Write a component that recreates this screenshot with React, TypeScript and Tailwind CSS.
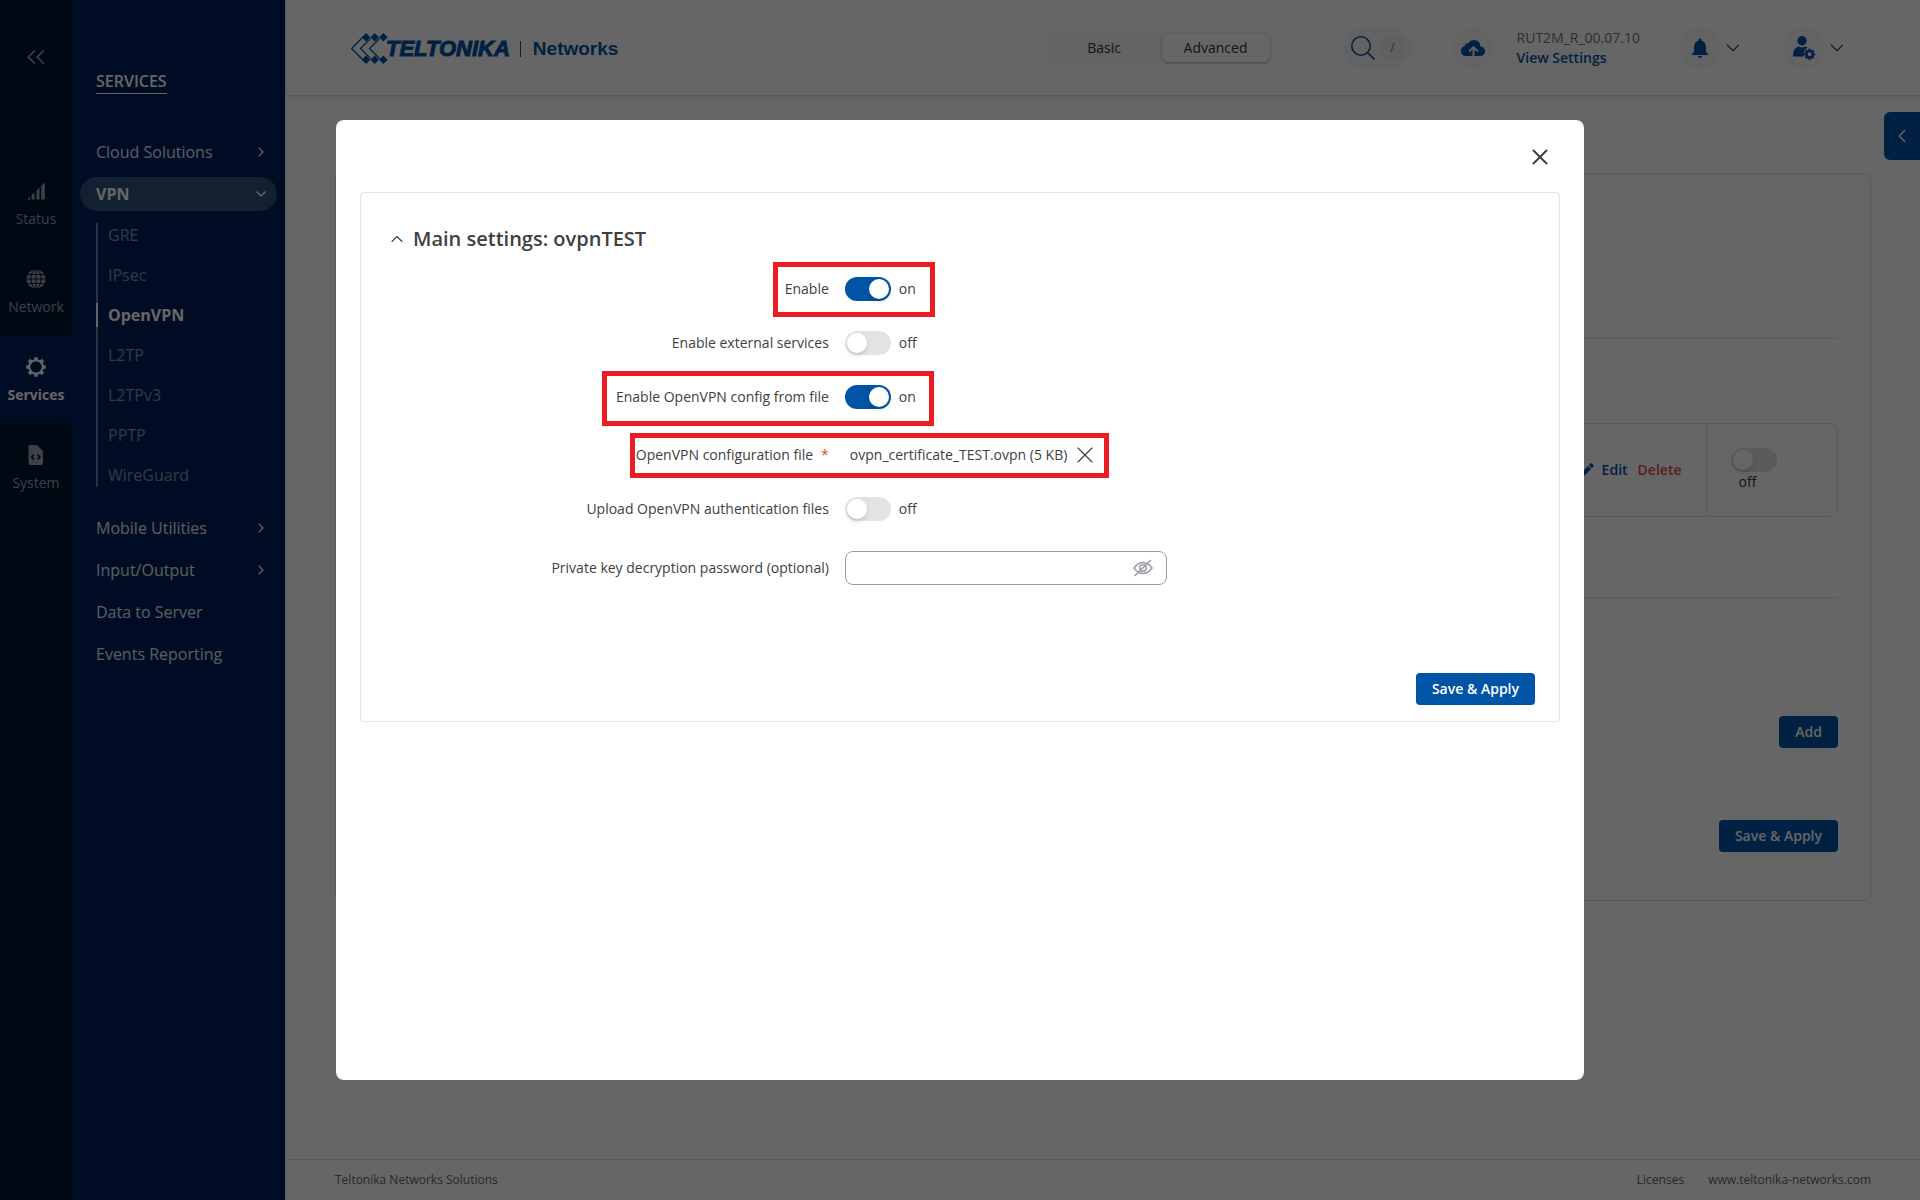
import { useState } from "react"
import type { ReactNode } from "react"
import { ChevronDown, ChevronLeft, ChevronRight, ChevronUp, X } from "lucide-react"
import { MdNotifications } from "react-icons/md"

const railItems = [
  { name: "Status", icon: <StatusIcon /> },
  { name: "Network", icon: <GlobeIcon /> },
  { name: "Services", icon: <CogIcon /> },
  { name: "System", icon: <FileCodeIcon /> },
]

const vpnItems = ["GRE", "IPsec", "OpenVPN", "L2TP", "L2TPv3", "PPTP", "WireGuard"]

const otherItems = [
  { name: "Mobile Utilities", nested: true },
  { name: "Input/Output", nested: true },
  { name: "Data to Server", nested: false },
  { name: "Events Reporting", nested: false },
]

function CollapseIcon() {
  return (
    <svg width="18" height="14" viewBox="0 0 18 14" fill="none" stroke="currentColor" strokeWidth="1.7" aria-hidden="true">
      <path d="M8 .5L1.2 7L8 13.5M17 .5L10.2 7L17 13.5" />
    </svg>
  )
}

function StatusIcon() {
  return (
    <svg width="18" height="18" viewBox="0 0 18 18" fill="currentColor" aria-hidden="true">
      <path d="M0 17.5L3 14.5V17.5ZM4.5 13.2L7.5 10.4V17.5H4.5ZM9.5 8.6L12.5 5.8V17.5H9.5ZM14.2 4L17.8 .5V17.5H14.2Z" />
    </svg>
  )
}

function GlobeIcon() {
  return (
    <svg width="20" height="20" viewBox="0 0 20 20" fill="none" aria-hidden="true">
      <circle cx="10" cy="10" r="9.6" fill="currentColor" />
      <g stroke="#001432" strokeWidth="1">
        <path d="M10 0V20M0 10H20M1.5 5.5H18.5M1.5 14.5H18.5" />
        <ellipse cx="10" cy="10" rx="5" ry="9.6" />
      </g>
    </svg>
  )
}

function CogIcon() {
  return (
    <svg width="20" height="20" viewBox="0 0 20 20" fill="none" aria-hidden="true">
      <circle cx="10" cy="10" r="6.8" stroke="currentColor" strokeWidth="2" />
      <g stroke="currentColor" strokeWidth="3.4">
        <path d="M10 .3V3M10 17V19.7M.3 10H3M17 10H19.7M3 3L5 5M15 15L17 17M3 17L5 15M15 5L17 3" />
      </g>
    </svg>
  )
}

function FileCodeIcon() {
  return (
    <svg width="16" height="20" viewBox="0 0 16 20" aria-hidden="true">
      <path d="M2 0H9L15 6V18a2 2 0 0 1-2 2H2.5a2 2 0 0 1-2-2V2A2 2 0 0 1 2 0Z" fill="currentColor" />
      <path d="M6 9.5L3.7 12L6 14.5M9.5 9.5L11.8 12L9.5 14.5" stroke="#001432" strokeWidth="1.7" fill="none" />
    </svg>
  )
}

function CloudIcon() {
  return (
    <svg width="24" height="16" viewBox="0 0 24 16" aria-hidden="true">
      <path
        d="M5 16A5 5 0 0 1 3.6 6.2A3.6 3.6 0 0 1 7.6 3.2A6.3 6.3 0 0 1 19.3 6.4A4.8 4.8 0 0 1 19.2 16Z"
        fill="#0054a6"
      />
      <path d="M12.5 16V8M8.2 11.5L12.5 7.2L16.8 11.5" stroke="#f7f7f7" strokeWidth="1.9" fill="none" />
    </svg>
  )
}

function SearchIcon() {
  return (
    <svg width="24" height="24" viewBox="0 0 24 24" fill="none" stroke="#0054a6" strokeWidth="1.6" aria-hidden="true">
      <circle cx="10" cy="10" r="9.2" />
      <path d="M16.5 16.5L23.5 23.5" />
    </svg>
  )
}

function UserCogIcon() {
  return (
    <svg width="24" height="24" viewBox="0 0 24 24" aria-hidden="true">
      <g fill="currentColor">
        <circle cx="10" cy="4.8" r="4.7" />
        <path d="M1 20.5Q1 11.5 7 10.5Q10 12.5 13 10.5Q14.5 10.9 15.5 11.8Q11.3 14 11.8 20.5Z" />
      </g>
      <circle cx="17.6" cy="18.3" r="3.2" fill="none" stroke="currentColor" strokeWidth="2.4" />
      <path
        d="M17.6 12.8V14.5M17.6 22.1V23.8M12.1 18.3H13.8M21.4 18.3H23.1M13.7 14.4L14.9 15.6M20.3 21L21.5 22.2M13.7 22.2L14.9 21M20.3 15.6L21.5 14.4"
        stroke="currentColor"
        strokeWidth="2.4"
      />
    </svg>
  )
}

function PencilIcon() {
  return (
    <svg width="14" height="14" viewBox="0 0 14 14" aria-hidden="true">
      <path d="M0 14L1 10L8 3L11 6L4 13ZM8.8 2.2L10.4 .6Q11.2 0 12 .6L13.4 2Q14 2.8 13.4 3.6L11.8 5.2Z" fill="#0054a6" />
    </svg>
  )
}

function HiddenEyeIcon() {
  return (
    <svg width="20" height="18" viewBox="0 0 20 18" fill="none" stroke="#9a9aa8" strokeWidth="1.5" aria-hidden="true">
      <path d="M1 9Q5 3.5 10 3.5T19 9Q15 14.5 10 14.5T1 9Z" />
      <circle cx="10" cy="9" r="3.2" />
      <path d="M1.5 17L18 1" />
    </svg>
  )
}

function Logo() {
  return (
    <a href="#home" aria-label="Teltonika Networks" className="flex items-center pt-0.5 font-['Liberation_Sans',sans-serif] text-[#0054a6]">
      <svg width="37" height="32" viewBox="0 0 37 32" aria-hidden="true">
        <path
          d="M15 0L19.3 4.3L15 8.6L10.7 4.3ZM23.7 0L28 4.3L23.7 8.6L19.4 4.3ZM32.4 0L36.7 4.3L32.4 8.6L28.1 4.3ZM15 22.4L19.3 26.7L15 31L10.7 26.7ZM23.7 22.4L28 26.7L23.7 31L19.4 26.7ZM32.4 22.4L36.7 26.7L32.4 31L28.1 26.7Z"
          fill="currentColor"
        />
        <path d="M12.5 3.5L.7 15.5L12.5 27.5M19.5 5.5L9.5 15.5L19.5 25.5M28.5 5.5L18.5 15.5L28.5 25.5" fill="none" stroke="currentColor" strokeWidth="1.3" />
      </svg>
      <span className="-ml-0.5 text-[22px] leading-8 font-bold italic [-webkit-text-stroke:1px]">TELTONIKA</span>
      <span className="mr-3 ml-2.5 h-4 w-px bg-[#0054a6]" />
      <span className="text-[19px] leading-8 font-bold">Networks</span>
    </a>
  )
}

function Rail() {
  return (
    <nav aria-label="Sections" className="w-[72px] shrink-0 bg-[#001432]">
      <button aria-label="Collapse menu" className="flex h-[159px] w-full justify-center pt-[50px] text-white/60">
        <CollapseIcon />
      </button>
      {railItems.map((item) => (
        <a
          key={item.name}
          href={`#${item.name.toLowerCase()}`}
          className={
            item.name === "Services"
              ? "flex h-22 flex-col items-center bg-[#00205a] pt-[22px] text-sm font-bold text-white"
              : "flex h-22 flex-col items-center pt-[22px] text-sm font-medium text-white/60"
          }
        >
          <span className="flex h-5 items-center">{item.icon}</span>
          <span className="mt-2">{item.name}</span>
        </a>
      ))}
    </nav>
  )
}

function Menu() {
  const link = "flex h-[34px] items-center justify-between rounded-full pr-2 pl-4 text-white/90"

  return (
    <nav aria-label="Services" className="w-[213px] shrink-0 bg-[#00205a] px-2 pt-[69px]">
      <h2 className="ml-4 inline-block border-b border-white text-base font-semibold text-white">SERVICES</h2>
      <div className="mt-[41px] flex flex-col gap-2">
        <a href="#cloud" className={link}>
          Cloud Solutions
          <ChevronRight size={16} />
        </a>
        <a href="#vpn" className="flex h-[34px] items-center justify-between rounded-full bg-[#2d5078] pr-2 pl-4 font-bold text-white">
          VPN
          <ChevronDown size={16} />
        </a>
      </div>
      <ul className="mt-3 mb-6 ml-4 flex flex-col gap-4 border-l-2 border-white/40">
        {vpnItems.map((name) => (
          <li key={name} className="leading-6">
            <a
              href={`#${name.toLowerCase()}`}
              className={
                name === "OpenVPN"
                  ? "-ml-0.5 block border-l-2 border-white pl-2.5 font-bold text-white"
                  : "block pl-2.5 text-white/50"
              }
            >
              {name}
            </a>
          </li>
        ))}
      </ul>
      <div className="flex flex-col gap-2">
        {otherItems.map((item) => (
          <a key={item.name} href="#menu" className={link}>
            {item.name}
            {item.nested && <ChevronRight size={16} />}
          </a>
        ))}
      </div>
    </nav>
  )
}

function Header() {
  return (
    <header className="flex h-24 items-center border-b border-[#e3e3e3] bg-white pr-[72px] pl-[65px] shadow-md shadow-black/5">
      <Logo />
      <div className="ml-auto flex items-center gap-9 text-sm">
        <div className="mr-9 flex h-8 w-56 items-center rounded-md bg-[#f7f7f7] pr-px">
          <button className="flex-1 text-[#333333]">Basic</button>
          <button className="h-7 w-[108px] rounded-md bg-white text-[#333333] shadow-sm shadow-black/20">Advanced</button>
        </div>
        <button aria-label="Search" className="flex h-10 w-[70px] items-center gap-1.5 rounded-full bg-[#f7f7f7] px-2">
          <SearchIcon />
          <kbd className="flex size-6 items-center justify-center rounded bg-[#eef2f2] font-['Open_Sans',sans-serif] text-xs text-gray-500">/</kbd>
        </button>
        <div className="ml-1 flex items-center gap-6">
          <button aria-label="Firmware updates" className="flex size-10 items-center justify-center rounded-full bg-[#f7f7f7]">
            <CloudIcon />
          </button>
          <div className="leading-5">
            <p className="text-[#777777]">RUT2M_R_00.07.10</p>
            <a href="#settings" className="font-semibold text-[#0054a6]">View Settings</a>
          </div>
        </div>
        <button aria-label="Notifications" className="mx-1 flex items-center gap-0.5 text-[#0054a6]">
          <span className="flex size-10 items-center justify-center rounded-full bg-[#f7f7f7]">
            <MdNotifications size={24} />
          </span>
          <ChevronDown size={22} strokeWidth={1.3} />
        </button>
        <button aria-label="Account" className="flex items-center gap-0.5 text-[#0054a6]">
          <span className="flex size-10 items-center justify-center rounded-full bg-[#f7f7f7]">
            <UserCogIcon />
          </span>
          <ChevronDown size={22} strokeWidth={1.3} />
        </button>
      </div>
    </header>
  )
}

function Toggle({ id, label, defaultOn = false }: { id?: string; label?: string; defaultOn?: boolean }) {
  const [on, setOn] = useState(defaultOn)
  return (
    <>
      <input
        id={id}
        type="checkbox"
        aria-label={label}
        checked={on}
        onChange={() => setOn(!on)}
        className="h-6 w-[46px] shrink-0 appearance-none rounded-full bg-[#e3e3e3] p-0.5 before:block before:size-5 before:rounded-full before:bg-white before:shadow-md before:content-[''] checked:bg-[#0054a6] checked:before:ml-[22px]"
      />
      <span className="mx-2">{on ? "on" : "off"}</span>
    </>
  )
}

function Instances() {
  return (
    <main className="flex-1 px-[49px] pt-[77px]">
      <section className="rounded-md border border-[#dde1e6] px-8 pb-12">
        <div className="h-[165px] border-b border-[#dde1e6]" />
        <div className="mt-[84px] rounded-lg border border-[#dde1e6]">
          <table className="h-[92px] w-full">
            <tbody>
              <tr>
                <td className="border-r border-[#dde1e6] pr-6">
                  <div className="flex items-center justify-end gap-2.5 font-semibold">
                    <a href="#edit" className="flex items-center gap-2 text-[#0054a6]">
                      <PencilIcon />
                      Edit
                    </a>
                    <a href="#delete" className="text-[#e04f3f]">Delete</a>
                  </div>
                </td>
                <td className="w-[131px] pl-6">
                  <div className="flex w-[46px] flex-wrap">
                    <Toggle label="Instance state" />
                  </div>
                </td>
              </tr>
            </tbody>
          </table>
        </div>
        <hr className="mt-20 mb-[118px] border-[#dde1e6]" />
        <div className="flex flex-col items-end gap-[72px]">
          <PrimaryButton>Add</PrimaryButton>
          <PrimaryButton>Save &amp; Apply</PrimaryButton>
        </div>
      </section>
    </main>
  )
}

function PrimaryButton({ children }: { children: ReactNode }) {
  return <button className="h-8 rounded bg-[#0054a6] px-4 text-sm font-semibold text-white">{children}</button>
}

function Field({ id, label, required, children }: { id: string; label: string; required?: boolean; children: ReactNode }) {
  return (
    <div className="flex items-center gap-4">
      <label htmlFor={id} className="w-[39%] text-right">
        {label}
        {required && <span className="ml-2 text-[#e04f3f]">*</span>}
      </label>
      <div className="relative flex items-center">{children}</div>
    </div>
  )
}

function Highlight({ className }: { className: string }) {
  return <span aria-hidden="true" className={`pointer-events-none absolute border-[5px] border-[#ed1c24] ${className}`} />
}

function SettingsModal() {
  return (
    <div className="fixed inset-0 flex items-center justify-center bg-black/60">
      <div role="dialog" aria-modal="true" aria-labelledby="modal-title" className="h-[80%] w-[65%] rounded-lg bg-white p-6 text-sm text-[#404041]">
        <div className="flex h-12 items-start justify-end pr-[7px]">
          <button aria-label="Close">
            <X size={26} strokeWidth={1.8} />
          </button>
        </div>
        <form className="rounded border border-[#e3e3e3] pt-8 pb-4" onSubmit={(e) => e.preventDefault()}>
          <h1 id="modal-title" className="flex items-center gap-1.5 pl-[26px] text-xl leading-7 font-semibold">
            <ChevronUp size={20} strokeWidth={1.3} />
            Main settings: ovpnTEST
          </h1>
          <div className="mt-6 flex flex-col gap-[30px] pl-px">
            <Field id="enable" label="Enable">
              <Toggle id="enable" defaultOn />
              <Highlight className="-top-[15px] -left-[72px] h-[55px] w-[162px]" />
            </Field>
            <Field id="external" label="Enable external services">
              <Toggle id="external" />
            </Field>
            <Field id="from-file" label="Enable OpenVPN config from file">
              <Toggle id="from-file" defaultOn />
              <Highlight className="-top-[14px] -left-[243px] h-[55px] w-[332px]" />
            </Field>
            <div className="pt-1">
              <Field id="config-file" label="OpenVPN configuration file" required>
                <span className="ml-[5px] leading-6">ovpn_certificate_TEST.ovpn (5 KB)</span>
                <button id="config-file" type="button" aria-label="Remove file" className="-my-1 ml-1">
                  <X size={28} strokeWidth={1} />
                </button>
                <Highlight className="-top-[10px] -left-[215px] h-[45px] w-[479px]" />
              </Field>
            </div>
            <Field id="auth-files" label="Upload OpenVPN authentication files">
              <Toggle id="auth-files" />
            </Field>
            <Field id="key-password" label="Private key decryption password (optional)">
              <input id="key-password" type="password" className="h-[34px] w-[322px] rounded-lg border border-[#9a9aa8] pr-10 pl-3" />
              <button type="button" aria-label="Show password" className="absolute right-3.5">
                <HiddenEyeIcon />
              </button>
            </Field>
          </div>
          <div className="mt-22 flex justify-end pr-6">
            <PrimaryButton>Save &amp; Apply</PrimaryButton>
          </div>
        </form>
      </div>
    </div>
  )
}

export default function App() {
  return (
    <div className="flex min-h-screen bg-white font-['Open_Sans',sans-serif] text-[#333333]">
      <Rail />
      <Menu />
      <div className="flex flex-1 flex-col border-l border-[#e3e3e3] text-sm">
        <Header />
        <Instances />
        <footer className="flex h-[41px] items-center gap-6 border-t border-[#e3e3e3] px-[49px] text-xs text-[#666666]">
          <span className="mr-auto">Teltonika Networks Solutions</span>
          <a href="#licenses">Licenses</a>
          <a href="#site">www.teltonika-networks.com</a>
        </footer>
      </div>
      <button aria-label="Open side panel" className="fixed top-28 right-0 flex h-12 w-9 items-center justify-center rounded-l-md bg-[#0054a6] text-white">
        <ChevronLeft size={22} strokeWidth={1.5} />
      </button>
      <SettingsModal />
    </div>
  )
}
